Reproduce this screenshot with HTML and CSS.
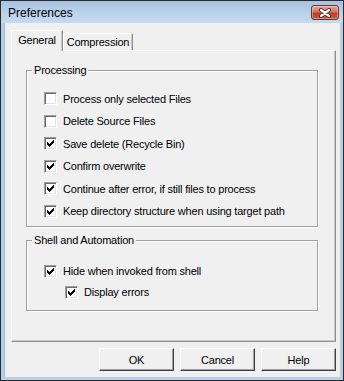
FILE: index.html
```html
<!DOCTYPE html>
<html lang="en">
<head>
    <meta charset="UTF-8">
    <title>Preferences</title>
    <link rel="stylesheet" href="styles.css">
</head>
<body>
    <div class="window">
        <div class="titlebar">
            <span class="title">Preferences</span>
            <span class="close-btn">
                <svg width="14" height="10" viewBox="0 0 14 10">
                    <path d="M3 2 L11 8 M11 2 L3 8" stroke="#3b2a28" stroke-width="4" stroke-linecap="round"/>
                    <path d="M3 2 L11 8 M11 2 L3 8" stroke="#fff" stroke-width="2.2" stroke-linecap="round"/>
                </svg>
            </span>
        </div>

        <div class="content">
            <div class="tabs">
                <span class="tab tab-general active">General</span>
                <span class="tab tab-compression">Compression</span>
            </div>

            <div class="panel">
                <div class="group group-processing">
                    <span class="group-title">Processing</span>
                    <label class="check"><span class="box"></span>Process only selected Files</label>
                    <label class="check"><span class="box"></span>Delete Source Files</label>
                    <label class="check"><span class="box checked"></span>Save delete (Recycle Bin)</label>
                    <label class="check"><span class="box checked"></span>Confirm overwrite</label>
                    <label class="check"><span class="box checked"></span>Continue after error, if still files to process</label>
                    <label class="check"><span class="box checked"></span>Keep directory structure when using target path</label>
                </div>

                <div class="group group-shell">
                    <span class="group-title">Shell and Automation</span>
                    <label class="check"><span class="box checked"></span>Hide when invoked from shell</label>
                    <label class="check sub"><span class="box checked"></span>Display errors</label>
                </div>
            </div>

            <div class="buttons">
                <button class="btn">OK</button>
                <button class="btn">Cancel</button>
                <button class="btn">Help</button>
            </div>
        </div>
    </div>

    <script>
        // draw the classic 7x7 check mark into every checked box
        var mark = '<svg width="7" height="7" viewBox="0 0 7 7" shape-rendering="crispEdges">';
        var tops = [2, 3, 4, 3, 2, 1, 0];
        for (var i = 0; i < tops.length; i++) {
            mark += '<rect x="' + i + '" y="' + tops[i] + '" width="1" height="3" fill="#000"/>';
        }
        mark += '</svg>';
        document.querySelectorAll(".box.checked").forEach(function (box) {
            box.innerHTML = mark;
        });
    </script>
</body>
</html>
```

FILE: styles.css
```css
* {
    box-sizing: border-box;
}
body {
    margin: 0;
    font-family: "Liberation Sans", Arial, sans-serif;
    font-size: 11px;
    letter-spacing: -0.2px;
    color: #000;
}
.window {
    width: 344px;
    height: 381px;
    border: 1px solid #2a2a2a;
    background: #b6cfe9;
    display: flex;
    flex-direction: column;
}
.titlebar {
    height: 22px;
    flex: none;
    display: flex;
    align-items: center;
    justify-content: space-between;
    padding: 0 4px 0 7px;
    background: linear-gradient(#a7c2e0, #bcd3eb 60%, #c5daef);
}
.title {
    font-size: 12px;
    letter-spacing: 0;
    margin-top: 1px;
}
.close-btn {
    width: 28px;
    height: 15px;
    margin-top: 1px;
    display: flex;
    align-items: center;
    justify-content: center;
    border: 1px solid #6b3530;
    border-radius: 3px;
    background: linear-gradient(#e6a89c, #d4725f 45%, #bf3f29 55%, #c65a43);
    box-shadow: inset 0 0 0 1px rgba(255, 255, 255, 0.35);
}
.content {
    flex: 1;
    margin: 0 3px 3px 3px;
    background: #f0f0f0;
    padding: 7px 4px 0 6px;
    border-left: 1px solid #9eb8d6;
}
.tabs {
    display: flex;
    align-items: flex-end;
    height: 20px;
}
.tab {
    height: 17px;
    line-height: 16px;
    text-align: center;
    background: #f0f0f0;
    border: 1px solid #fff;
    border-right-color: #8f8f8f;
    border-bottom: none;
    box-shadow: inset -1px 0 0 #c8c8c8;
}
.tab-general {
    width: 52px;
}
.tab-compression {
    width: 70px;
}
.tab.active {
    height: 21px;
    margin-bottom: -1px;
    line-height: 19px;
    position: relative;
    z-index: 1;
}
.panel {
    height: 292px;
    border: 1px solid #fff;
    border-right-color: #8f8f8f;
    border-bottom-color: #8f8f8f;
    box-shadow: inset -1px -1px 0 #c8c8c8;
    padding: 0 17px 0 14px;
}
.group {
    position: relative;
    display: flex;
    flex-direction: column;
    border: 1px solid #a0a0a0;
    box-shadow: inset 1px 1px 0 #fff, 1px 1px 0 #fff;
    padding-left: 17px;
}
.group-title {
    position: absolute;
    top: -8px;
    left: 5px;
    padding: 0 2px;
    line-height: 14px;
    background: #f0f0f0;
}
.group-processing {
    margin-top: 19px;
    padding-top: 21px;
    padding-bottom: 8px;
    gap: 9.6px;
}
.group-shell {
    margin-top: 13px;
    padding-top: 24px;
    padding-bottom: 11px;
    gap: 8px;
}
.check {
    display: flex;
    align-items: center;
    height: 13px;
    gap: 6px;
    white-space: nowrap;
}
.check.sub {
    margin-left: 21px;
}
.box {
    width: 13px;
    height: 13px;
    flex: none;
    display: flex;
    align-items: center;
    justify-content: center;
    background: #fff;
    border: 1px solid;
    border-color: #a0a0a0 #fff #fff #a0a0a0;
    box-shadow: inset 1px 1px 0 #696969, inset -1px -1px 0 #e3e3e3;
}
.buttons {
    display: flex;
    justify-content: flex-end;
    gap: 6px;
    margin-top: 6px;
}
.btn {
    width: 75px;
    height: 23px;
    padding: 0;
    font-family: inherit;
    font-size: 11px;
    letter-spacing: -0.2px;
    color: #000;
    background: #f0f0f0;
    border: 1px solid;
    border-color: #fff #404040 #404040 #fff;
    box-shadow: inset -1px -1px 0 #a0a0a0;
}
```
